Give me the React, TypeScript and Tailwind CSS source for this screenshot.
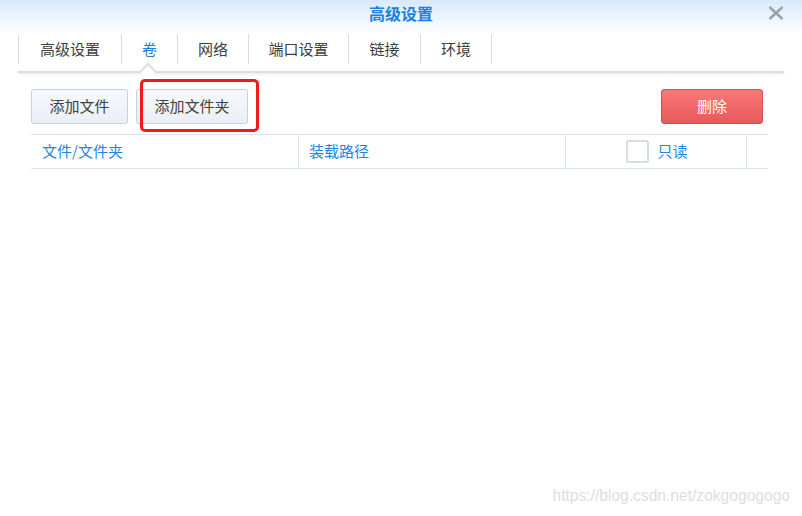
import React from "react";

const tabs = [
  { label: "高级设置", w: "w-[103px]" },
  { label: "卷", w: "w-[56px]" },
  { label: "网络", w: "w-[71px]" },
  { label: "端口设置", w: "w-[100px]" },
  { label: "链接", w: "w-[72px]" },
  { label: "环境", w: "w-[72px]" },
];
const activeTab = 1;

export default function App() {
  return (
    <div
      className="relative w-[802px] h-[516px] overflow-hidden bg-white text-[#333]"
      style={{ fontFamily: '"Noto Sans CJK SC", "Noto Sans", sans-serif' }}
    >
      {/* Title bar */}
      <div className="relative flex h-[34px] items-center justify-center bg-gradient-to-b from-[#d8e9fa] to-white">
        <span className="text-[16px] font-bold leading-none text-[#1a7fe3] -mt-[8px]">高级设置</span>
        <button className="absolute right-[18px] top-[6px] text-[#9aa1a8]">
          <svg width="16" height="14" viewBox="0 0 16 14">
            <path d="M1.5 1 L14.5 13 M14.5 1 L1.5 13" stroke="currentColor" strokeWidth="2.4" />
          </svg>
        </button>
      </div>

      {/* Tabs */}
      <div className="mx-[18px]">
        <div className="flex h-[30px]">
          {tabs.map((t, i) => (
            <div
              key={t.label}
              className={`flex ${t.w} items-center justify-center border-l border-[#d5dee8] text-[15px] ${
                i === tabs.length - 1 ? "border-r" : ""
              } ${i === activeTab ? "text-[#1a7fe3]" : "text-[#3d3d3d]"}`}
            >
              {t.label}
            </div>
          ))}
        </div>
        <div className="relative mt-[7px] h-[2px] bg-[#dedede] shadow-[0_1px_3px_rgba(0,0,0,0.12)]">
          <div className="absolute left-[124px] -top-[6px] h-[12px] w-[12px] rotate-45 border-l-2 border-t-2 border-[#dedede] bg-white" />
        </div>
      </div>

      {/* Toolbar */}
      <div className="mt-[16px] flex items-center pl-[31px] pr-[39px]">
        <div className="flex gap-[8px]">
          <button className="h-[35px] w-[97px] rounded-[3px] border border-[#c6d0da] bg-gradient-to-b from-[#f7f9fc] to-[#e9eff5] text-[15px] text-[#404040]">
            添加文件
          </button>
          <button className="h-[35px] w-[112px] rounded-[3px] border border-[#c6d0da] bg-gradient-to-b from-[#f7f9fc] to-[#e9eff5] text-[15px] text-[#404040]">
            添加文件夹
          </button>
        </div>
        <button className="ml-auto h-[35px] w-[102px] rounded-[3px] border border-[#d94f4f] bg-gradient-to-b from-[#fb7777] to-[#e65a5a] text-[15px] text-white">
          删除
        </button>
      </div>

      {/* Table header */}
      <div className="mt-[10px] ml-[31px] mr-[34px] flex h-[35px] border-y border-[#dbe3ec] text-[15px] text-[#1d86ea]">
        <div className="flex w-[268px] items-center border-r border-[#dbe3ec] pl-[11px]">文件/文件夹</div>
        <div className="flex w-[267px] items-center border-r border-[#dbe3ec] pl-[10px]">装载路径</div>
        <div className="flex w-[181px] items-center justify-center gap-[8px] border-r border-[#dbe3ec] pl-[2px]">
          <span className="h-[23px] w-[23px] rounded-[2px] border-2 border-[#d6dde5] bg-white" />
          <span>只读</span>
        </div>
        <div className="flex-1" />
      </div>

      {/* Annotation */}
      <div className="absolute left-[140px] top-[79px] h-[53px] w-[119px] rounded-[5px] border-[3px] border-[#f0191c]" />

      {/* Watermark */}
      <div
        className="absolute right-[12px] bottom-[9px] text-[15.6px] text-[#dedede]"
        style={{ fontFamily: '"Liberation Sans", Arial, sans-serif' }}
      >
        https://blog.csdn.net/zokgogogogo
      </div>
    </div>
  );
}
